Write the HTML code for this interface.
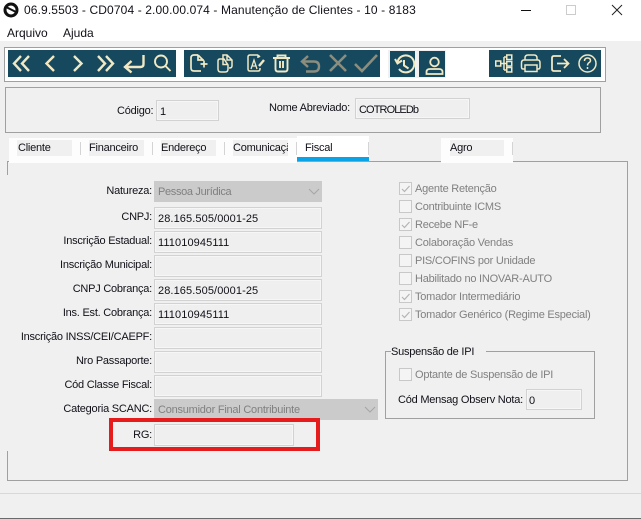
<!DOCTYPE html>
<html lang="pt"><head><meta charset="utf-8"><title>Manutenção de Clientes</title>
<style>
html,body{margin:0;padding:0}
body{width:641px;height:519px;overflow:hidden;position:relative;background:#f0f0f0;font-family:"Liberation Sans",sans-serif;font-size:11px;letter-spacing:-.23px;color:#101018}
div{position:absolute;box-sizing:border-box}
.t{white-space:nowrap;line-height:14px}
.m{font-size:12px;letter-spacing:0}
.l{white-space:nowrap;line-height:14px;text-align:right;right:490px}
.f{left:154px;width:168px;height:22px;border:1px solid #d2d2d2;background:#efefef;box-shadow:inset 0 0 0 1px #f6f6f6;padding:4px 0 0 3px;line-height:14px;white-space:nowrap;letter-spacing:.1px}
.d{color:#808080;white-space:nowrap;line-height:14px;left:415px}
.c{left:399px;width:13px;height:13px;border:1px solid #c8c8c8;background:#f4f4f4}
.g{background:#f0f0f0;height:16px;top:140px}
.s{width:1px;height:13px;top:142px;background:#d4d4d4}
</style></head><body>
<div style="left:0;top:0;width:641px;height:41px;background:#fff"></div>
<svg style="position:absolute;left:0;top:0" width="641" height="41">
<circle cx="11" cy="10" r="6" fill="none" stroke="#111" stroke-width="3"/><path d="M6 7 L16 12" stroke="#111" stroke-width="2"/>
<path d="M521 10.5H531" stroke="#111" stroke-width="1"/>
<rect x="566.5" y="5.500" width="9" height="9" fill="none" stroke="#ccc"/>
<path d="M612 5L622 15M622 5L612 15" stroke="#222" stroke-width="1" fill="none"/>
</svg>
<div class="t m" style="left:24px;top:3px;letter-spacing:.12px">06.9.5503 - CD0704 - 2.00.00.074 - Manutenção de Clientes - 10 - 8183</div>
<div class="t m" style="left:7px;top:26px">Arquivo</div>
<div class="t m" style="left:63px;top:26px">Ajuda</div>

<div style="left:4px;top:47px;width:602px;height:35px;border:1px solid #a0a0a0;background:#fff"></div>
<div style="left:8px;top:50px;width:168px;height:27px;background:#17495e"></div>
<div style="left:184px;top:50px;width:196px;height:27px;background:#17495e"></div>
<div style="left:388px;top:50px;width:29px;height:28px;background:#f0f0f0"></div>
<div style="left:390px;top:51px;width:25px;height:26px;background:#17495e"></div>
<div style="left:417px;top:50px;width:29px;height:28px;background:#f0f0f0"></div>
<div style="left:419px;top:51px;width:26px;height:26px;background:#17495e"></div>
<div style="left:489px;top:50px;width:112px;height:27px;background:#17495e"></div>
<svg style="position:absolute;left:0;top:41px" width="641" height="45" viewBox="0 41 641 45" fill="none" stroke="#f1e9c4" stroke-width="2.400">
<path d="M21 56L14 63.500L21 71M29 56L22 63.500L29 71"/>
<path d="M54 56L46.500 63.500L54 71"/>
<path d="M74 56L81.500 63.500L74 71"/>
<path d="M98 56L105 63.500L98 71M106 56L113 63.500L106 71"/>
<path d="M143.500 55V64Q143.500 67 140.500 67H126M131.500 61L125 67L131.500 72.500"/>
<g stroke-width="1.900">
<circle cx="161" cy="61.500" r="6"/><path d="M165.500 66L170.500 71"/>
<path d="M198 55H194Q191 55 191 58V68Q191 71 194 71H201M198 55V60H203V61M198 55L203 60M200.500 64H207.500M204 60.500V67.500" stroke-width="1.700"/>
<path d="M221 59H220Q218 59 218 61V69Q218 72 221 72H225Q228 72 228 69V65L224 59ZM223 59V55H227L232 60V66Q232 68 229 68M227 55V60H232M223 59V64.500H228" stroke-width="1.500"/>
<path d="M258 55H250Q248 55 248 57V69Q248 71 250 71H258Q260 71 260 69V68M258 55V58M258 55L260 57" stroke-width="1.500"/>
<path d="M251 69L254 60L257 69M252 66H256" stroke-width="1.300"/>
<path d="M259 66L264 60" stroke-width="2.400"/>
<path d="M273 58H290M277.500 58V55.500H285.500V58M275.500 58V69Q275.500 71.500 278 71.500H285Q287.500 71.500 287.500 69V58M280 61V68M283 61V68"/>
</g>
<g stroke="#8b8d7f">
<path d="M308 56L302 61.500L308 67M303 61.500H314Q319 61.500 319 66.500Q319 71.500 314 71.500H306"/>
<path d="M330 55L346 71M346 55L330 71" stroke-width="2.600"/>
<path d="M355 64L362 71L377 55" stroke-width="2.600"/>
</g>
<g stroke-width="1.800">
<path d="M397.500 62A8.500 8.500 0 1 1 399 69M395 59L397.500 63.500L402 60.500M404 60V65.500L408.500 68.500" stroke-width="2"/>
<circle cx="434.500" cy="62" r="4.300"/><path d="M426.500 74V72Q426.500 69 430 69H439Q442.500 69 442.500 72V74Z"/>
</g>
<g stroke-width="1.500">
<rect x="495.750" y="61" width="5" height="5"/><rect x="506.750" y="55" width="5" height="4.500"/><rect x="506.750" y="61.500" width="5" height="4.500"/><rect x="506.750" y="67.500" width="5" height="4.500"/>
<path d="M501 63.500H504M504 57V70M504 57H507M504 63.500H507M504 70H507"/>
</g>
<g stroke-width="1.500">
<path d="M525 60V58Q525 55 528 55H534Q537 55 537 58V60M525 69H523Q521.500 69 521.500 67V63Q521.500 60 524 60H538Q540 60 540 63V67Q540 69 538 69H537M525 65H537V71.500H525Z"/>
<path d="M561 56H554Q552 56 552 58V69Q552 71 554 71H561M557 63.500H568M564 59L568.500 63.500L564 68" stroke-width="1.800"/>
<circle cx="587.500" cy="63.500" r="8.500"/><path d="M584.500 61Q584.500 58 587.500 58Q590.500 58 590.500 60.500Q590.500 62 588.500 63Q587.500 64 587.500 65.500M587.500 67V69"/>
</g>
</svg>

<div style="left:5px;top:87px;width:596px;height:46px;border:1px solid #a0a0a0"></div>
<div class="t" style="left:117px;top:104px">Código:</div>
<div class="f" style="left:156px;top:100px;width:63px;height:21px">1</div>
<div class="t" style="left:269px;top:101px">Nome Abreviado:</div>
<div class="f" style="left:355px;top:98px;width:115px;height:21px;letter-spacing:-.9px">COTROLEDb</div>

<div style="left:7px;top:161px;width:621px;height:320px;border:1px solid #a0a0a0"></div>
<div style="left:5px;top:175px;width:6px;height:276px;background:#f0f0f0"></div>
<div style="left:9px;top:138px;width:288px;height:25px;background:#fdfdfd"></div>
<div style="left:441px;top:138px;width:72px;height:25px;background:#fdfdfd"></div>
<div style="left:297px;top:136px;width:72px;height:25px;background:#fff"></div>
<div style="left:297px;top:157px;width:72px;height:4px;background:#0aa3e6"></div>
<div class="g" style="left:17px;width:55px"></div>
<div class="g" style="left:89px;width:55px"></div>
<div class="g" style="left:161px;width:55px"></div>
<div class="g" style="left:233px;width:55px"></div>
<div class="g" style="left:450px;width:54px"></div>
<div class="s" style="left:80px"></div><div class="s" style="left:152px"></div><div class="s" style="left:224px"></div><div class="s" style="left:296px"></div><div class="s" style="left:368px"></div><div class="s" style="left:512px"></div>
<div class="t" style="left:18px;top:141px">Cliente</div>
<div class="t" style="left:89px;top:141px">Financeiro</div>
<div class="t" style="left:161px;top:141px">Endereço</div>
<div class="t" style="left:233px;top:141px;width:55px;overflow:hidden">Comunicação</div>
<div class="t" style="left:305px;top:141px">Fiscal</div>
<div class="t" style="left:450px;top:141px">Agro</div>

<div class="l" style="top:184px;right:489px">Natureza:</div>
<div style="left:154px;top:181px;width:168px;height:21px;background:#cbcbcb;color:#808080;padding:4px 0 0 4px;line-height:14px;letter-spacing:-.33px">Pessoa Jurídica</div>
<svg style="position:absolute;left:308px;top:188px" width="12" height="8" fill="none" stroke="#a6a6a6"><path d="M1 1L6 6L11 1"/></svg>

<div class="l" style="top:210px;right:489px">CNPJ:</div><div class="f" style="top:207px">28.165.505/0001-25</div>
<div class="l" style="top:234px;right:489px">Inscrição Estadual:</div><div class="f" style="top:231px">111010945111</div>
<div class="l" style="top:258px;right:489px">Inscrição Municipal:</div><div class="f" style="top:255px"></div>
<div class="l" style="top:282px;right:489px">CNPJ Cobrança:</div><div class="f" style="top:279px">28.165.505/0001-25</div>
<div class="l" style="top:306px;right:489px">Ins. Est. Cobrança:</div><div class="f" style="top:303px">111010945111</div>
<div class="l" style="top:330px;right:489px">Inscrição INSS/CEI/CAEPF:</div><div class="f" style="top:327px"></div>
<div class="l" style="top:354px;right:489px">Nro Passaporte:</div><div class="f" style="top:351px"></div>
<div class="l" style="top:378px;right:489px">Cód Classe Fiscal:</div><div class="f" style="top:375px"></div>
<div class="l" style="top:402px;right:489px">Categoria SCANC:</div>
<div style="left:154px;top:399px;width:224px;height:21px;background:#cbcbcb;color:#808080;padding:4px 0 0 4px;line-height:14px">Consumidor Final Contribuinte</div>
<svg style="position:absolute;left:364px;top:406px" width="12" height="8" fill="none" stroke="#a6a6a6"><path d="M1 1L6 6L11 1"/></svg>
<div class="l" style="top:428px;right:489px">RG:</div><div class="f" style="top:424px;width:140px;height:22px"></div>
<div style="left:109px;top:418px;width:211px;height:33px;border:4px solid #e61c1c"></div>

<div class="c" style="top:182px"></div><div class="d" style="top:182px">Agente Retenção</div>
<div class="c" style="top:200px"></div><div class="d" style="top:200px">Contribuinte ICMS</div>
<div class="c" style="top:218px"></div><div class="d" style="top:218px">Recebe NF-e</div>
<div class="c" style="top:236px"></div><div class="d" style="top:236px">Colaboração Vendas</div>
<div class="c" style="top:254px"></div><div class="d" style="top:254px">PIS/COFINS por Unidade</div>
<div class="c" style="top:272px"></div><div class="d" style="top:272px">Habilitado no INOVAR-AUTO</div>
<div class="c" style="top:290px"></div><div class="d" style="top:290px">Tomador Intermediário</div>
<div class="c" style="top:308px"></div><div class="d" style="top:308px">Tomador Genérico (Regime Especial)</div>
<svg style="position:absolute;left:399px;top:182px" width="14" height="140" fill="none" stroke="#b4b4b4" stroke-width="1.200">
<path d="M3 7L5.500 9.500L10.500 4M3 43L5.500 45.500L10.500 40M3 115L5.500 117.500L10.500 112M3 133L5.500 135.500L10.500 130"/></svg>

<div style="left:385px;top:351px;width:210px;height:68px;border:1px solid #a0a0a0"></div>
<div class="t" style="left:391px;top:345px;background:#f0f0f0;padding-right:12px">Suspensão de IPI</div>
<div class="c" style="top:368px"></div><div class="d" style="top:368px">Optante de Suspensão de IPI</div>
<div class="t" style="left:398px;top:393px">Cód Mensag Observ Nota:</div>
<div class="f" style="left:526px;top:389px;width:56px;height:21px;padding-left:2px">0</div>

<div style="left:0;top:493px;width:641px;height:1px;background:#d8d8d8"></div>
<div style="left:0;top:518px;width:641px;height:1px;background:#6a6a6a"></div>
</body></html>
